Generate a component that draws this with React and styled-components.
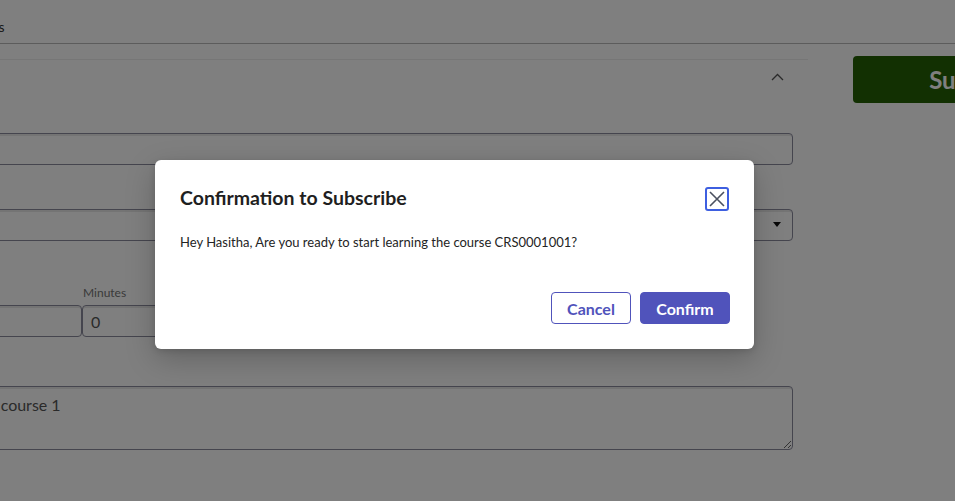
import React from "react";
import styled, { createGlobalStyle } from "styled-components";

const Global = createGlobalStyle`
  html, body { margin: 0; padding: 0; background: #ffffff; overflow: hidden; }
  body { font-family: Lato, "Open Sans", sans-serif; color: #333; }
  * { box-sizing: border-box; }
`;

const Page = styled.div`
  width: 955px;
  height: 501px;
  overflow: hidden;
  position: relative;
  background: #fff;
`;

const TabBar = styled.div`
  height: 44px;
  border-bottom: 1px solid #b8b8b8;
  display: flex;
  align-items: center;
  margin-left: -45px;
  padding-top: 9px;
`;

const Tab = styled.span`
  font-size: 14px;
  color: #333;
`;

const ContentRow = styled.div`
  display: flex;
  align-items: flex-start;
  margin-top: 12px;
  margin-left: -212px;
`;

const Card = styled.section`
  width: 1020px;
  margin-top: 3px;
  border-top: 1px solid #ececec;
  padding: 0 15px;
  flex-shrink: 0;
`;

const CardHeader = styled.div`
  height: 33px;
  display: flex;
  align-items: center;
  justify-content: flex-end;
  padding-right: 9px;
`;

const CardTitle = styled.h3`
  margin: 0 auto 0 0;
  font-size: 16px;
  font-weight: 700;
  color: #333;
`;

const Field = styled.div`
  display: flex;
  flex-direction: column;
  margin-top: ${(p) => p.$mt}px;
`;

const Label = styled.label`
  font-size: 12px;
  line-height: 16px;
  color: #757575;
  margin-bottom: 4px;
  padding-left: 1px;
`;

const inputBase = `
  height: 32px;
  border: 1px solid #8a8a9c;
  border-radius: 4px;
  background: #fff;
  box-shadow: inset 0 3px 0 -1px rgba(0,0,0,0.09);
  font-family: Lato, "Open Sans", sans-serif;
  font-size: 16px;
  color: #555;
  padding: 0 8px;
`;

const Input = styled.div`
  ${inputBase}
  display: flex;
  align-items: center;
`;

const SelectBox = styled.div`
  ${inputBase}
  display: flex;
  align-items: center;
  justify-content: space-between;
  padding-right: 11px;
`;

const DurationRow = styled.div`
  display: grid;
  grid-template-columns: 279px 279px;
  margin-top: ${(p) => p.$mt}px;
`;

const TextArea = styled.textarea`
  ${inputBase}
  height: 64px;
  width: 100%;
  resize: vertical;
  padding: 8px 8px;
  line-height: 20px;
  outline: none;
`;

const Side = styled.div`
  margin-left: 45px;
  flex-shrink: 0;
`;

const SubmitButton = styled.button`
  width: 256px;
  height: 47px;
  border: none;
  border-radius: 4px;
  background: #246005;
  color: #ffffff;
  font-family: Lato, "Open Sans", sans-serif;
  font-size: 24px;
  font-weight: 700;
`;

const Overlay = styled.div`
  position: absolute;
  inset: 0;
  background: rgba(0, 0, 0, 0.5);
  padding: 160px 0 0 155px;
`;

const Modal = styled.div`
  width: 599px;
  height: 189px;
  background: #fff;
  border-radius: 6px;
  box-shadow: 0 10px 30px rgba(0, 0, 0, 0.22), 0 2px 6px rgba(0, 0, 0, 0.12);
  padding: 24px 24px 25px 25px;
  display: flex;
  flex-direction: column;
`;

const ModalHead = styled.div`
  display: flex;
  align-items: center;
  justify-content: space-between;
  padding-right: 1px;
`;

const ModalTitle = styled.h2`
  margin: 0;
  font-size: 19.5px;
  font-weight: 700;
  color: #1f1f1f;
  line-height: 24px;
`;

const CloseButton = styled.button`
  width: 24px;
  height: 24px;
  padding: 0;
  border: 2px solid #3e5fe0;
  border-radius: 3px;
  background: #fff;
  display: flex;
  align-items: center;
  justify-content: center;
  margin-top: 3px;
`;

const ModalBody = styled.p`
  margin: 22px 0 0 0;
  font-size: 13px;
  line-height: 18px;
  color: #242424;
`;

const Footer = styled.div`
  margin-top: auto;
  display: flex;
  justify-content: flex-end;
  gap: 9px;
`;

const Btn = styled.button`
  height: 32px;
  width: ${(p) => p.$w}px;
  border-radius: 4px;
  border: 1px solid #5053bb;
  background: ${(p) => (p.$primary ? "#5053bb" : "#fff")};
  color: ${(p) => (p.$primary ? "#fff" : "#5053bb")};
  font-family: Lato, "Open Sans", sans-serif;
  font-size: 16px;
  font-weight: 700;
  padding: 0;
`;

export default function App() {
  return (
    <>
      <Global />
      <Page>
        <TabBar>
          <Tab>Courses</Tab>
        </TabBar>
        <ContentRow>
          <Card>
            <CardHeader>
              <CardTitle>Course Details</CardTitle>
              <svg width="13" height="8" viewBox="0 0 13 8">
                <path d="M1 7 L6.5 1.5 L12 7" fill="none" stroke="#555" strokeWidth="1.3" />
              </svg>
            </CardHeader>
            <Field $mt={20}>
              <Label>Course Name</Label>
              <Input>Course 1</Input>
            </Field>
            <Field $mt={24}>
              <Label>Category</Label>
              <SelectBox>
                <span>Programming</span>
                <svg width="8" height="6" viewBox="0 0 8 6">
                  <path d="M0 0 H8 L4 5 Z" fill="#111" />
                </svg>
              </SelectBox>
            </Field>
            <DurationRow $mt={44}>
              <Field $mt={0}>
                <Label>Hours</Label>
                <Input>2</Input>
              </Field>
              <Field $mt={0}>
                <Label>Minutes</Label>
                <Input>0</Input>
              </Field>
            </DurationRow>
            <Field $mt={29}>
              <Label>Description</Label>
              <TextArea readOnly defaultValue="Sample description for the course 1" />
            </Field>
          </Card>
          <Side>
            <SubmitButton>Subscribe</SubmitButton>
          </Side>
        </ContentRow>
        <Overlay>
          <Modal role="dialog">
            <ModalHead>
              <ModalTitle>Confirmation to Subscribe</ModalTitle>
              <CloseButton aria-label="Close">
                <svg width="18" height="18" viewBox="0 0 18 18">
                  <path d="M2 2 L16 16 M16 2 L2 16" stroke="#4b5160" strokeWidth="1.6" />
                </svg>
              </CloseButton>
            </ModalHead>
            <ModalBody>
              Hey Hasitha, Are you ready to start learning the course CRS0001001?
            </ModalBody>
            <Footer>
              <Btn $w={80}>Cancel</Btn>
              <Btn $w={90} $primary>Confirm</Btn>
            </Footer>
          </Modal>
        </Overlay>
      </Page>
    </>
  );
}
